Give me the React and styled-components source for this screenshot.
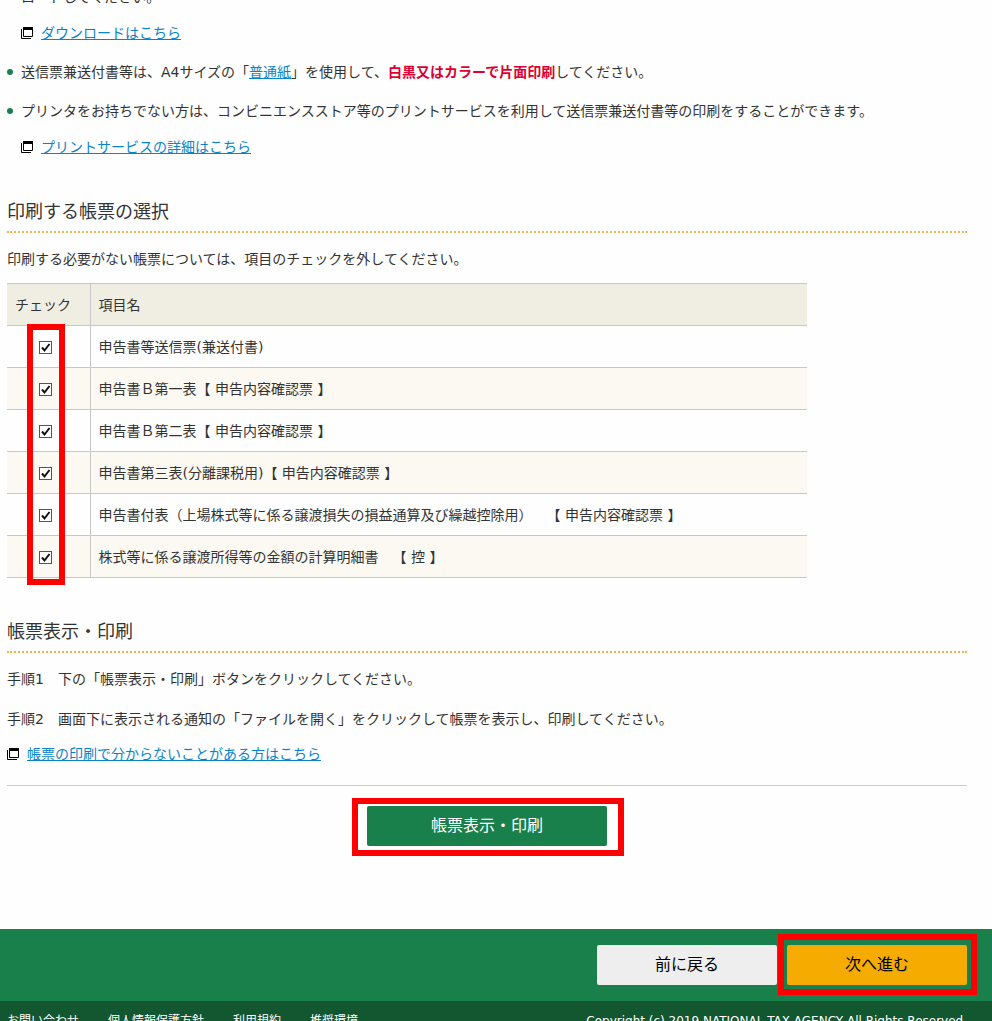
import React, { useState } from "react";
import styled, { createGlobalStyle, css } from "styled-components";

const GlobalStyle = createGlobalStyle`
  *,
  *::before,
  *::after {
    box-sizing: border-box;
  }

  body {
    margin: 0;
    background-color: #fefefe;
    color: #333333;
    font-family: "DejaVu Sans", "Noto Sans CJK JP", sans-serif;
    font-size: 14px;
    line-height: 20px;
    text-spacing-trim: space-all;
  }
`;

// --- Layout ---
const Page = styled.div`
  height: 100vh;
  overflow: hidden;
`;

const Main = styled.main`
  padding: 0 25px 0 7px;
`;

const Section = styled.section`
  margin-top: 40px;
`;

const SectionTitle = styled.h2`
  margin: 0 0 16px;
  padding-bottom: 5px;
  font-size: 18px;
  font-weight: 400;
  line-height: 28px;
  border-bottom: 2px dotted #f2b04e;
`;

const Text = styled.p`
  margin: 0 0 ${({ $gap = 20 }) => $gap}px;
`;

// --- Notes ---
const NoteList = styled.ul`
  list-style: none;
  margin: -13px 0 41px;
  padding: 0;
  display: flex;
  flex-direction: column;
  gap: 19px;
`;

const Note = styled.li`
  position: relative;
  padding-left: 14px;

  &::before {
    content: "";
    position: absolute;
    left: 0;
    top: 7px;
    width: 6px;
    height: 6px;
    border-radius: 50%;
    background-color: #1a804b;
  }
`;

const NoteLink = styled.div`
  margin-top: 16px;
`;

const Link = styled.a`
  color: #0a84c8;
  text-decoration: underline;
`;

const IconLink = styled(Link)`
  display: flex;
  align-items: center;
  gap: 8px;
  width: fit-content;
`;

const Strong = styled.strong`
  color: #dc0032;
  font-weight: 700;
`;

// --- Form table ---
const TableArea = styled.div`
  position: relative;
  max-width: 800px;
`;

const Table = styled.table`
  width: 100%;
  border-collapse: collapse;
`;

const cell = css`
  height: 42px;
  padding: 0 8px;
  border-top: 1px solid #c8c8c8;
  border-bottom: 1px solid #c8c8c8;
  text-align: left;
  font-weight: 400;
`;

const HeadCell = styled.th`
  ${cell}
  background-color: #f0eee2;

  &:first-child {
    width: 83px;
    border-right: 1px solid #c8c8c8;
  }
`;

const Cell = styled.td`
  ${cell}
  white-space: pre-wrap;
`;

const CheckCell = styled(Cell)`
  border-right: 1px solid #c8c8c8;
  padding: 0 6px 0 0;
  text-align: center;
`;

const Row = styled.tr`
  &:nth-child(even) {
    background-color: #fcf9f2;
  }
`;

const CheckBox = styled.span`
  display: inline-grid;
  vertical-align: middle;

  input,
  svg {
    grid-area: 1 / 1;
    width: 13px;
    height: 13px;
    margin: 0;
  }

  input {
    appearance: none;
    border: 1px solid #555555;
    background-color: #ffffff;
  }

  svg {
    pointer-events: none;
    visibility: hidden;
  }

  input:checked + svg {
    visibility: visible;
  }
`;

// --- Buttons ---
const buttonColors = {
  green: { background: "#1a804b", color: "#ffffff" },
  gray: { background: "#eeeeee", color: "#000000" },
  orange: { background: "#f5ab00", color: "#000000" },
};

const Button = styled.button`
  display: block;
  width: ${({ $wide }) => ($wide ? 240 : 180)}px;
  height: 40px;
  padding: 0;
  border: 0;
  border-radius: 2px;
  background-color: ${({ $variant }) => buttonColors[$variant].background};
  color: ${({ $variant }) => buttonColors[$variant].color};
  font-family: inherit;
  font-size: 16px;
  line-height: 24px;
  cursor: pointer;
`;

const ButtonArea = styled.div`
  display: flex;
  justify-content: center;
  margin-top: 21px;
  padding-top: 20px;
  border-top: 1px solid #cccccc;
`;

const Marked = styled.div`
  position: relative;
`;

// Red frame drawn over the part the reader has to use
const Frame = styled.span`
  position: absolute;
  inset: ${({ $inset }) => $inset};
  width: ${({ $width = "auto" }) => $width};
  border: 6px solid #ff0000;
  pointer-events: none;
`;

// --- Bottom bars ---
const ActionBar = styled.div`
  display: flex;
  justify-content: flex-end;
  gap: 10px;
  margin-top: 83px;
  padding: 16px 25px 16px 7px;
  background-color: #1a804b;
`;

const Footer = styled.footer`
  display: flex;
  justify-content: space-between;
  padding: 10px 25px 10px 7px;
  background-color: #12572f;
  color: #ffffff;
  font-size: 12px;
`;

const FooterNav = styled.nav`
  display: flex;
  gap: 29px;

  a {
    color: inherit;
    text-decoration: none;
  }
`;

const WindowIcon = () => (
  <svg width="12" height="12" viewBox="0 0 12 12" fill="none" aria-hidden="true">
    <path d="M0.5 2V11.5H10" stroke="#000" />
    <path d="M2.5 0.5H11.5V9.5H2.5Z" fill="#fff" stroke="#000" />
    <path d="M2 0H12V3H2Z" fill="#000" />
  </svg>
);

const forms = [
  "申告書等送信票(兼送付書)",
  "申告書Ｂ第一表【 申告内容確認票 】",
  "申告書Ｂ第二表【 申告内容確認票 】",
  "申告書第三表(分離課税用)【 申告内容確認票 】",
  "申告書付表（上場株式等に係る譲渡損失の損益通算及び繰越控除用）　【 申告内容確認票 】",
  "株式等に係る譲渡所得等の金額の計算明細書　【 控 】",
];

const footerLinks = ["お問い合わせ", "個人情報保護方針", "利用規約", "推奨環境"];

export default function App() {
  const [checked, setChecked] = useState(forms.map(() => true));

  const toggle = (index) =>
    setChecked(checked.map((value, i) => (i === index ? !value : value)));

  return (
    <Page lang="ja">
      <GlobalStyle />
      <Main>
        <NoteList>
          <Note>
            ロードしてください。
            <NoteLink>
              <IconLink href="#download">
                <WindowIcon />
                ダウンロードはこちら
              </IconLink>
            </NoteLink>
          </Note>
          <Note>
            送信票兼送付書等は、A4サイズの「<Link href="#paper">普通紙</Link>
            」を使用して、<Strong>白黒又はカラーで片面印刷</Strong>してください。
          </Note>
          <Note>
            プリンタをお持ちでない方は、コンビニエンスストア等のプリントサービスを利用して送信票兼送付書等の印刷をすることができます。
            <NoteLink>
              <IconLink href="#print-service">
                <WindowIcon />
                プリントサービスの詳細はこちら
              </IconLink>
            </NoteLink>
          </Note>
        </NoteList>

        <Section>
          <SectionTitle>印刷する帳票の選択</SectionTitle>
          <Text $gap={14}>
            印刷する必要がない帳票については、項目のチェックを外してください。
          </Text>
          <TableArea>
            <Table>
              <thead>
                <tr>
                  <HeadCell scope="col">チェック</HeadCell>
                  <HeadCell scope="col">項目名</HeadCell>
                </tr>
              </thead>
              <tbody>
                {forms.map((name, index) => (
                  <Row key={name}>
                    <CheckCell>
                      <CheckBox>
                        <input
                          type="checkbox"
                          id={`form-${index}`}
                          checked={checked[index]}
                          onChange={() => toggle(index)}
                        />
                        <svg viewBox="0 0 13 13" fill="none" aria-hidden="true">
                          <path d="M3 6.5L5.5 9.5L10.5 3" stroke="#111" strokeWidth="2" />
                        </svg>
                      </CheckBox>
                    </CheckCell>
                    <Cell>
                      <label htmlFor={`form-${index}`}>{name}</label>
                    </Cell>
                  </Row>
                ))}
              </tbody>
            </Table>
            <Frame $inset="41px auto -7px 20px" $width="38px" />
          </TableArea>
        </Section>

        <Section>
          <SectionTitle>帳票表示・印刷</SectionTitle>
          <Text>手順1　下の「帳票表示・印刷」ボタンをクリックしてください。</Text>
          <Text $gap={15}>
            手順2　画面下に表示される通知の「ファイルを開く」をクリックして帳票を表示し、印刷してください。
          </Text>
          <IconLink href="#print-help">
            <WindowIcon />
            帳票の印刷で分からないことがある方はこちら
          </IconLink>
          <ButtonArea>
            <Marked>
              <Button type="button" $variant="green" $wide>
                帳票表示・印刷
              </Button>
              <Frame $inset="-8px -17px -10px -15px" />
            </Marked>
          </ButtonArea>
        </Section>
      </Main>

      <ActionBar>
        <Button type="button" $variant="gray">
          前に戻る
        </Button>
        <Marked>
          <Button type="button" $variant="orange">
            次へ進む
          </Button>
          <Frame $inset="-11px -10px -10px -9px" />
        </Marked>
      </ActionBar>
      <Footer>
        <FooterNav>
          {footerLinks.map((label) => (
            <a key={label} href="#footer">
              {label}
            </a>
          ))}
        </FooterNav>
        <span>Copyright (c) 2019 NATIONAL TAX AGENCY All Rights Reserved.</span>
      </Footer>
    </Page>
  );
}
